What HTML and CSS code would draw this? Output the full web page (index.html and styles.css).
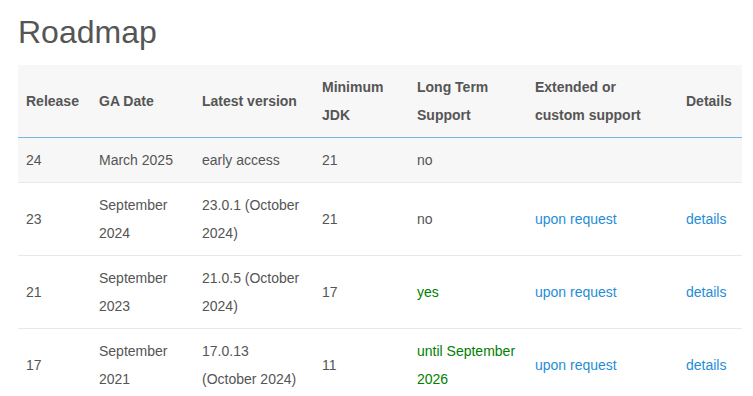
FILE: index.html
```html
<!DOCTYPE html>
<html lang="en">
<head>
<meta charset="UTF-8">
<meta name="viewport" content="width=device-width, initial-scale=1">
<title>Roadmap</title>
<link rel="stylesheet" href="styles.css">
</head>
<body>

<div class="container">
  <h1>Roadmap</h1>

  <table class="roadmap">
    <thead>
      <tr>
        <th class="c-release">Release</th>
        <th class="c-date">GA Date</th>
        <th class="c-version">Latest version</th>
        <th class="c-jdk">Minimum JDK</th>
        <th class="c-lts">Long Term Support</th>
        <th class="c-ext">Extended or custom support</th>
        <th class="c-details">Details</th>
      </tr>
    </thead>
    <tbody>
      <tr class="shaded">
        <td>24</td>
        <td>March 2025</td>
        <td>early access</td>
        <td>21</td>
        <td>no</td>
        <td></td>
        <td></td>
      </tr>
      <tr>
        <td>23</td>
        <td>September 2024</td>
        <td>23.0.1 (October 2024)</td>
        <td>21</td>
        <td>no</td>
        <td><a href="#">upon request</a></td>
        <td><a href="#">details</a></td>
      </tr>
      <tr>
        <td>21</td>
        <td>September 2023</td>
        <td>21.0.5 (October 2024)</td>
        <td>17</td>
        <td class="yes">yes</td>
        <td><a href="#">upon request</a></td>
        <td><a href="#">details</a></td>
      </tr>
      <tr>
        <td>17</td>
        <td>September 2021</td>
        <td>17.0.13 (October 2024)</td>
        <td>11</td>
        <td class="yes">until September 2026</td>
        <td><a href="#">upon request</a></td>
        <td><a href="#">details</a></td>
      </tr>
    </tbody>
  </table>
</div>

</body>
</html>
```

FILE: styles.css
```css
body {
  margin: 0;
  padding: 0;
  background: white;
  font-family: 'Liberation Sans', Arial, sans-serif;
  font-size: 14px;
  color: #555;
}
.container {
  padding: 0 11px 0 18px;
}
h1 {
  font-size: 32px;
  font-weight: normal;
  line-height: 1.1;
  color: #555;
  margin: 15px 0 15px 0;
}
.roadmap {
  width: 724px;
  border-collapse: collapse;
  table-layout: fixed;
}
.roadmap th, .roadmap td {
  padding: 8px;
  line-height: 28px;
  text-align: left;
  vertical-align: middle;
}
.roadmap thead th {
  background: #f7f7f7;
  font-weight: bold;
  border-bottom: 1px solid #74b7df;
}
.roadmap tbody td {
  border-bottom: 1px solid #e8e8e8;
}
.roadmap tbody tr:last-child td {
  border-bottom: none;
}
.roadmap tr.shaded td {
  background: #f7f7f7;
}
.c-release { width: 57px; }
.c-date { width: 87px; }
.c-version { width: 104px; }
.c-jdk { width: 79px; }
.c-lts { width: 102px; }
.roadmap th.c-ext {
  width: 113px;
  padding-right: 30px;
}
.c-details { width: 48px; }
.roadmap a {
  color: #1f8dd6;
  text-decoration: none;
}
.roadmap .yes {
  color: #008000;
}
```
